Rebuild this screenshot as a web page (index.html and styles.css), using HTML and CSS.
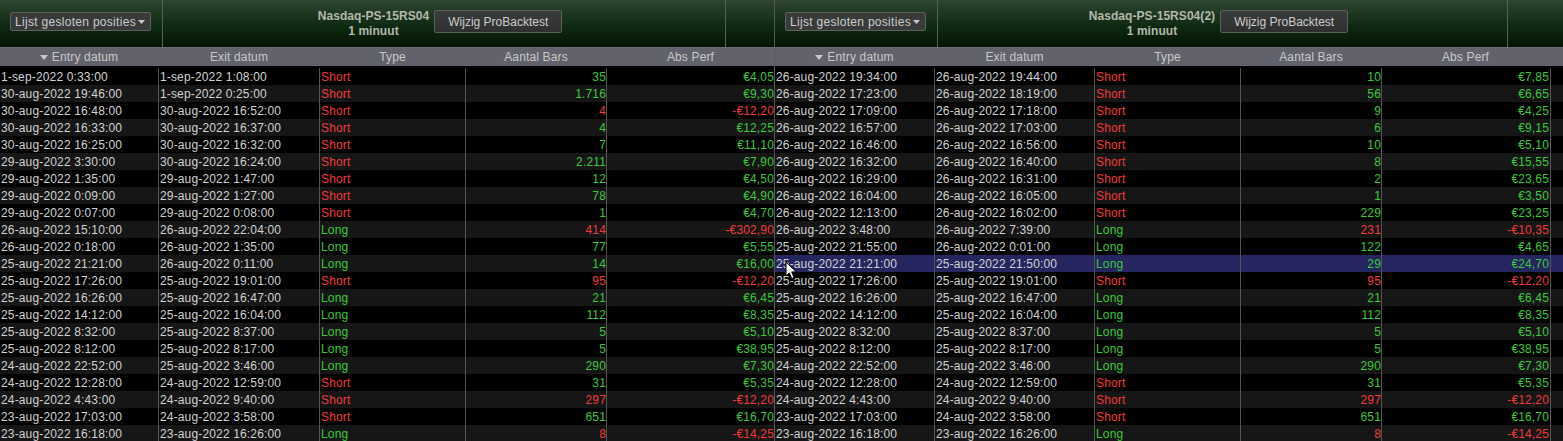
FILE: index.html
```html
<!DOCTYPE html>
<html lang="nl">
<head>
<meta charset="utf-8">
<title>Lijst gesloten posities</title>
<link rel="stylesheet" href="styles.css">
</head>
<body>
<div class="panels">
<section class="panel panel-a">
<div class="toolbar">
<div class="tool tool-select"><button class="select">Lijst gesloten posities<svg class="caret" width="7" height="4" viewBox="0 0 7 4"><path d="M0 0h7L3.5 4z"/></svg></button></div>
<div class="tool tool-main"><div class="title">Nasdaq-PS-15RS04<br>1 minuut</div><button class="action">Wijzig ProBacktest</button></div>
<div class="tool tool-end"></div>
</div>
<div class="row head"><span><svg class="sort" width="8" height="5" viewBox="0 0 8 5"><path d="M0 0h8L4 5z"/></svg>Entry datum</span><span>Exit datum</span><span>Type</span><span>Aantal Bars</span><span>Abs Perf</span></div>
<div class="body">
<div class="row"><span>1-sep-2022 0:33:00</span><span>1-sep-2022 1:08:00</span><span class="red">Short</span><span class="num green">35</span><span class="num green">€4,05</span></div>
<div class="row"><span>30-aug-2022 19:46:00</span><span>1-sep-2022 0:25:00</span><span class="red">Short</span><span class="num green">1.716</span><span class="num green">€9,30</span></div>
<div class="row"><span>30-aug-2022 16:48:00</span><span>30-aug-2022 16:52:00</span><span class="red">Short</span><span class="num red">4</span><span class="num red">-€12,20</span></div>
<div class="row"><span>30-aug-2022 16:33:00</span><span>30-aug-2022 16:37:00</span><span class="red">Short</span><span class="num green">4</span><span class="num green">€12,25</span></div>
<div class="row"><span>30-aug-2022 16:25:00</span><span>30-aug-2022 16:32:00</span><span class="red">Short</span><span class="num green">7</span><span class="num green">€11,10</span></div>
<div class="row"><span>29-aug-2022 3:30:00</span><span>30-aug-2022 16:24:00</span><span class="red">Short</span><span class="num green">2.211</span><span class="num green">€7,90</span></div>
<div class="row"><span>29-aug-2022 1:35:00</span><span>29-aug-2022 1:47:00</span><span class="red">Short</span><span class="num green">12</span><span class="num green">€4,50</span></div>
<div class="row"><span>29-aug-2022 0:09:00</span><span>29-aug-2022 1:27:00</span><span class="red">Short</span><span class="num green">78</span><span class="num green">€4,90</span></div>
<div class="row"><span>29-aug-2022 0:07:00</span><span>29-aug-2022 0:08:00</span><span class="red">Short</span><span class="num green">1</span><span class="num green">€4,70</span></div>
<div class="row"><span>26-aug-2022 15:10:00</span><span>26-aug-2022 22:04:00</span><span class="green">Long</span><span class="num red">414</span><span class="num red">-€302,90</span></div>
<div class="row"><span>26-aug-2022 0:18:00</span><span>26-aug-2022 1:35:00</span><span class="green">Long</span><span class="num green">77</span><span class="num green">€5,55</span></div>
<div class="row"><span>25-aug-2022 21:21:00</span><span>26-aug-2022 0:11:00</span><span class="green">Long</span><span class="num green">14</span><span class="num green">€16,00</span></div>
<div class="row"><span>25-aug-2022 17:26:00</span><span>25-aug-2022 19:01:00</span><span class="red">Short</span><span class="num red">95</span><span class="num red">-€12,20</span></div>
<div class="row"><span>25-aug-2022 16:26:00</span><span>25-aug-2022 16:47:00</span><span class="green">Long</span><span class="num green">21</span><span class="num green">€6,45</span></div>
<div class="row"><span>25-aug-2022 14:12:00</span><span>25-aug-2022 16:04:00</span><span class="green">Long</span><span class="num green">112</span><span class="num green">€8,35</span></div>
<div class="row"><span>25-aug-2022 8:32:00</span><span>25-aug-2022 8:37:00</span><span class="green">Long</span><span class="num green">5</span><span class="num green">€5,10</span></div>
<div class="row"><span>25-aug-2022 8:12:00</span><span>25-aug-2022 8:17:00</span><span class="green">Long</span><span class="num green">5</span><span class="num green">€38,95</span></div>
<div class="row"><span>24-aug-2022 22:52:00</span><span>25-aug-2022 3:46:00</span><span class="green">Long</span><span class="num green">290</span><span class="num green">€7,30</span></div>
<div class="row"><span>24-aug-2022 12:28:00</span><span>24-aug-2022 12:59:00</span><span class="red">Short</span><span class="num green">31</span><span class="num green">€5,35</span></div>
<div class="row"><span>24-aug-2022 4:43:00</span><span>24-aug-2022 9:40:00</span><span class="red">Short</span><span class="num red">297</span><span class="num red">-€12,20</span></div>
<div class="row"><span>23-aug-2022 17:03:00</span><span>24-aug-2022 3:58:00</span><span class="red">Short</span><span class="num green">651</span><span class="num green">€16,70</span></div>
<div class="row"><span>23-aug-2022 16:18:00</span><span>23-aug-2022 16:26:00</span><span class="green">Long</span><span class="num red">8</span><span class="num red">-€14,25</span></div>
</div>
</section>
<section class="panel panel-b">
<div class="toolbar">
<div class="tool tool-select"><button class="select">Lijst gesloten posities<svg class="caret" width="7" height="4" viewBox="0 0 7 4"><path d="M0 0h7L3.5 4z"/></svg></button></div>
<div class="tool tool-main"><div class="title">Nasdaq-PS-15RS04(2)<br>1 minuut</div><button class="action">Wijzig ProBacktest</button></div>
<div class="tool tool-end"></div>
</div>
<div class="row head"><span><svg class="sort" width="8" height="5" viewBox="0 0 8 5"><path d="M0 0h8L4 5z"/></svg>Entry datum</span><span>Exit datum</span><span>Type</span><span>Aantal Bars</span><span>Abs Perf</span></div>
<div class="body">
<div class="row"><span>26-aug-2022 19:34:00</span><span>26-aug-2022 19:44:00</span><span class="red">Short</span><span class="num green">10</span><span class="num green">€7,85</span></div>
<div class="row"><span>26-aug-2022 17:23:00</span><span>26-aug-2022 18:19:00</span><span class="red">Short</span><span class="num green">56</span><span class="num green">€6,65</span></div>
<div class="row"><span>26-aug-2022 17:09:00</span><span>26-aug-2022 17:18:00</span><span class="red">Short</span><span class="num green">9</span><span class="num green">€4,25</span></div>
<div class="row"><span>26-aug-2022 16:57:00</span><span>26-aug-2022 17:03:00</span><span class="red">Short</span><span class="num green">6</span><span class="num green">€9,15</span></div>
<div class="row"><span>26-aug-2022 16:46:00</span><span>26-aug-2022 16:56:00</span><span class="red">Short</span><span class="num green">10</span><span class="num green">€5,10</span></div>
<div class="row"><span>26-aug-2022 16:32:00</span><span>26-aug-2022 16:40:00</span><span class="red">Short</span><span class="num green">8</span><span class="num green">€15,55</span></div>
<div class="row"><span>26-aug-2022 16:29:00</span><span>26-aug-2022 16:31:00</span><span class="red">Short</span><span class="num green">2</span><span class="num green">€23,65</span></div>
<div class="row"><span>26-aug-2022 16:04:00</span><span>26-aug-2022 16:05:00</span><span class="red">Short</span><span class="num green">1</span><span class="num green">€3,50</span></div>
<div class="row"><span>26-aug-2022 12:13:00</span><span>26-aug-2022 16:02:00</span><span class="red">Short</span><span class="num green">229</span><span class="num green">€23,25</span></div>
<div class="row"><span>26-aug-2022 3:48:00</span><span>26-aug-2022 7:39:00</span><span class="green">Long</span><span class="num red">231</span><span class="num red">-€10,35</span></div>
<div class="row"><span>25-aug-2022 21:55:00</span><span>26-aug-2022 0:01:00</span><span class="green">Long</span><span class="num green">122</span><span class="num green">€4,65</span></div>
<div class="row selected"><span>25-aug-2022 21:21:00</span><span>25-aug-2022 21:50:00</span><span class="green">Long</span><span class="num green">29</span><span class="num green">€24,70</span></div>
<div class="row"><span>25-aug-2022 17:26:00</span><span>25-aug-2022 19:01:00</span><span class="red">Short</span><span class="num red">95</span><span class="num red">-€12,20</span></div>
<div class="row"><span>25-aug-2022 16:26:00</span><span>25-aug-2022 16:47:00</span><span class="green">Long</span><span class="num green">21</span><span class="num green">€6,45</span></div>
<div class="row"><span>25-aug-2022 14:12:00</span><span>25-aug-2022 16:04:00</span><span class="green">Long</span><span class="num green">112</span><span class="num green">€8,35</span></div>
<div class="row"><span>25-aug-2022 8:32:00</span><span>25-aug-2022 8:37:00</span><span class="green">Long</span><span class="num green">5</span><span class="num green">€5,10</span></div>
<div class="row"><span>25-aug-2022 8:12:00</span><span>25-aug-2022 8:17:00</span><span class="green">Long</span><span class="num green">5</span><span class="num green">€38,95</span></div>
<div class="row"><span>24-aug-2022 22:52:00</span><span>25-aug-2022 3:46:00</span><span class="green">Long</span><span class="num green">290</span><span class="num green">€7,30</span></div>
<div class="row"><span>24-aug-2022 12:28:00</span><span>24-aug-2022 12:59:00</span><span class="red">Short</span><span class="num green">31</span><span class="num green">€5,35</span></div>
<div class="row"><span>24-aug-2022 4:43:00</span><span>24-aug-2022 9:40:00</span><span class="red">Short</span><span class="num red">297</span><span class="num red">-€12,20</span></div>
<div class="row"><span>23-aug-2022 17:03:00</span><span>24-aug-2022 3:58:00</span><span class="red">Short</span><span class="num green">651</span><span class="num green">€16,70</span></div>
<div class="row"><span>23-aug-2022 16:18:00</span><span>23-aug-2022 16:26:00</span><span class="green">Long</span><span class="num red">8</span><span class="num red">-€14,25</span></div>
</div>
</section>
</div>
<svg class="cursor" width="13" height="19" viewBox="0 0 13 19"><path d="M1 1v14l3.3-3.2 2.4 5.7 2.4-1-2.4-5.6h4.6z" fill="#fff" stroke="#000" stroke-width="1"/></svg>
</body>
</html>
```
FILE: styles.css
```css
html, body {
  margin: 0;
  height: 441px;
  overflow: hidden;
  background: #000;
}

body {
  position: relative;
  font-family: "Liberation Sans", Arial, sans-serif;
  font-size: 12px;
  letter-spacing: 0.15px;
  color: #d2d2d2;
}

.panels {
  display: flex;
}

.panel-a {
  width: 774px;
  --cols: 159px 161px 146px 141px 167px;
}

.panel-b {
  flex: 1;
  border-left: 1px solid #555a55;
  --cols: 160px 160px 146px 141px 169px 1fr;
}

.toolbar {
  display: flex;
  height: 47px;
  background: linear-gradient(#2f4632, #0f2a12 55%, #041404);
}

.tool {
  display: flex;
  align-items: center;
  box-sizing: border-box;
}

.tool-select {
  padding-left: 10px;
  border-right: 1px solid #54605a;
}

.panel-a .tool-select { width: 163px; }
.panel-b .tool-select { width: 163px; }

.tool-main {
  justify-content: center;
  gap: 5px;
  padding-right: 8px;
  border-right: 1px solid #54605a;
}

.panel-a .tool-main { width: 563px; }
.panel-b .tool-main { width: 570px; }

.tool-end { flex: 1; }

.select, .action {
  font: inherit;
  letter-spacing: inherit;
  color: #cccccc;
  box-sizing: border-box;
  border-radius: 2px;
  padding: 0;
  margin: 0 0 4px;
}

.select {
  display: flex;
  align-items: center;
  justify-content: space-between;
  width: 141px;
  height: 19px;
  padding: 0 5px 0 4px;
  letter-spacing: 0.3px;
  background: #383b3a;
  border: 1px solid #5b625d;
}

.caret {
  fill: #c8c8c8;
}

.action {
  width: 128px;
  height: 23px;
  letter-spacing: 0;
  background: linear-gradient(#3b3d3d, #2e3030);
  border: 1px solid #5a5f5c;
}

.title {
  font-weight: bold;
  line-height: 15px;
  text-align: center;
  color: #b4b8ac;
  letter-spacing: 0.05px;
}

.row {
  display: grid;
  grid-template-columns: var(--cols);
  height: 17px;
  line-height: 19px;
  white-space: nowrap;
}

.row > span {
  box-sizing: border-box;
  padding-left: 1px;
  border-right: 1px solid #555;
  overflow: hidden;
}

.panel-a .row > span:nth-child(5) { border-right: 0; overflow: visible; }
.panel-b .row > span:nth-child(5) { padding-right: 1px; }

.row.head {
  position: relative;
  height: 19px;
  margin-bottom: 2px;
  line-height: 21px;
  background: linear-gradient(#6b6b74 1px, #62626c 1px);
  color: #c8c8c8;
  letter-spacing: 0.15px;
}

.row.head > span {
  position: relative;
  padding: 0;
  border-right-color: transparent;
  text-align: center;
}

.row.head > span::after {
  content: "";
  position: absolute;
  right: -1px;
  top: 5px;
  width: 1px;
  height: 10px;
  background: #e8e8e8;
}

.panel-a .row.head > span:nth-child(5)::after { display: none; }
.sort { fill: #c8c8c8; margin-right: 4px; vertical-align: 1px; }

.body .row:nth-child(even) { background: #161616; }
.body .row.selected { background: #25255f; }

.num {
  text-align: right;
  padding-right: 0;
}

.green { color: #3cc83c; }
.red { color: #f03a3a; }

.cursor {
  position: absolute;
  left: 785px;
  top: 261px;
}
```
